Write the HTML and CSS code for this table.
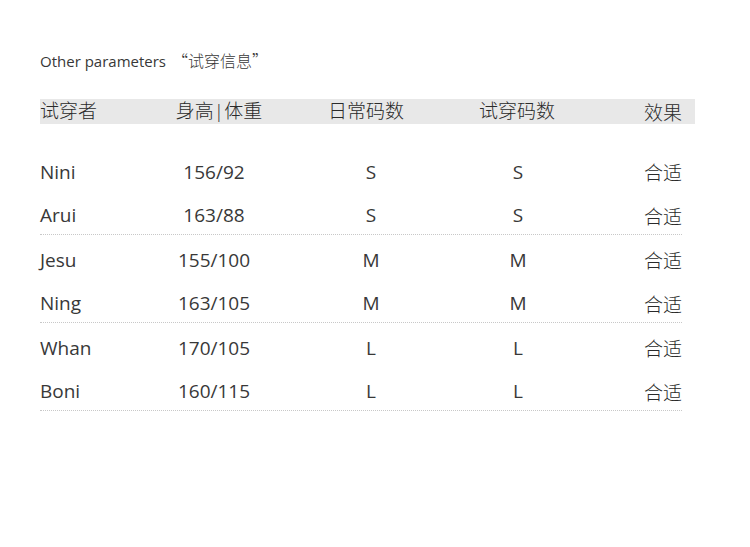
FILE: index.html
```html
<!DOCTYPE html>
<html lang="zh">
<head>
<meta charset="utf-8">
<title>Other parameters</title>
<link rel="stylesheet" href="styles.css">
</head>
<body>
<div class="page">
  <h1 class="title">Other parameters <span class="cjk">“试穿信息”</span></h1>
  <div class="table">
    <div class="head">
      <span class="c1">试穿者</span>
      <span class="c2">身高|体重</span>
      <span class="c3">日常码数</span>
      <span class="c4">试穿码数</span>
      <span class="c5">效果</span>
    </div>
    <div class="pair">
      <div class="row"><span class="c1">Nini</span><span class="c2">156/92</span><span class="c3">S</span><span class="c4">S</span><span class="c5">合适</span></div>
      <div class="row"><span class="c1">Arui</span><span class="c2">163/88</span><span class="c3">S</span><span class="c4">S</span><span class="c5">合适</span></div>
    </div>
    <div class="pair">
      <div class="row"><span class="c1">Jesu</span><span class="c2">155/100</span><span class="c3">M</span><span class="c4">M</span><span class="c5">合适</span></div>
      <div class="row"><span class="c1">Ning</span><span class="c2">163/105</span><span class="c3">M</span><span class="c4">M</span><span class="c5">合适</span></div>
    </div>
    <div class="pair">
      <div class="row"><span class="c1">Whan</span><span class="c2">170/105</span><span class="c3">L</span><span class="c4">L</span><span class="c5">合适</span></div>
      <div class="row"><span class="c1">Boni</span><span class="c2">160/115</span><span class="c3">L</span><span class="c4">L</span><span class="c5">合适</span></div>
    </div>
  </div>
</div>
</body>
</html>
```
FILE: styles.css
```css
html, body {
  margin: 0;
  padding: 0;
  background: #fff;
}
body {
  font-family: "Open Sans", "Noto Sans CJK SC", sans-serif;
  font-weight: 400;
  color: #383838;
}
.page {
  padding: 50px 0 0 40px;
}
.title {
  margin: 0;
  height: 20px;
  font-size: 15px;
  line-height: 20px;
  font-weight: 400;
  white-space: nowrap;
}
.cjk {
  font-family: "Noto Sans CJK SC", sans-serif;
  font-size: 16px;
  font-weight: 300;
  margin-left: 2px;
}
.table {
  margin-top: 29px;
  width: 642px;
}
.head {
  display: grid;
  grid-template-columns: 100px 158px 136px 166px 82px;
  width: 642px;
  padding-right: 13px;
  height: 25px;
  line-height: 25px;
  background: #e8e8e8;
  font-size: 19px;
  font-weight: 300;
  color: #2a2a2a;
  margin-bottom: 23px;
}
.head span, .row span {
  white-space: nowrap;
}
.c1 { text-align: left; }
.c2, .c3, .c4 { text-align: center; }
.c5 { text-align: right; font-family: "Noto Sans CJK SC", sans-serif; font-weight: 300; color: #2a2a2a; }
.pair {
  border-bottom: 1px dotted #c8c8c8;
}
.row {
  display: grid;
  grid-template-columns: 100px 148px 166px 128px 100px;
  font-size: 19px;
  padding-top: 6px;
  line-height: 38px;
}
.row + .row {
  line-height: 37px;
}
```
